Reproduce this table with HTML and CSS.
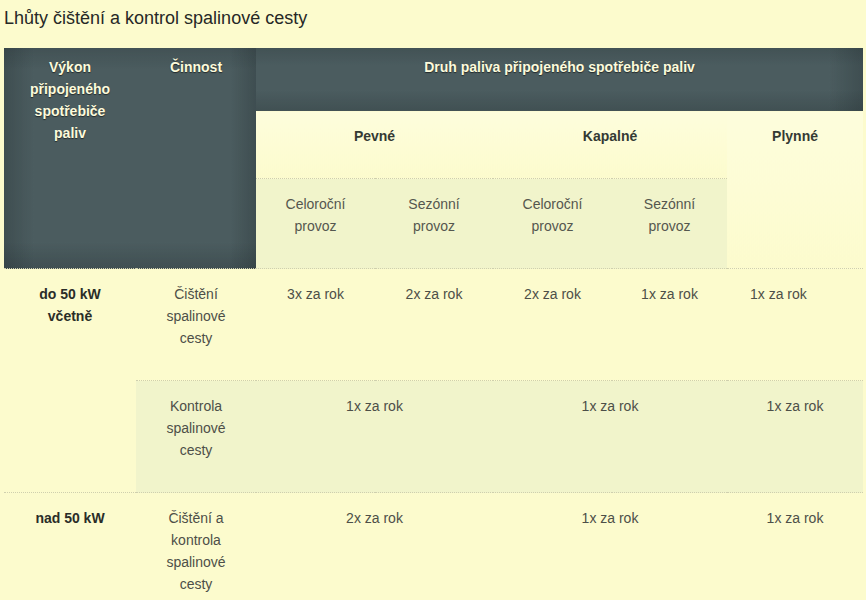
FILE: index.html
```html
<!DOCTYPE html>
<html lang="cs">
<head>
<meta charset="utf-8">
<title>Lhůty čištění a kontrol spalinové cesty</title>
<link rel="stylesheet" href="styles.css">
</head>
<body>
<h1 class="title">Lhůty čištění a kontrol spalinové cesty</h1>
<table class="grid">
  <colgroup>
    <col class="c1"><col class="c2"><col class="c3"><col class="c4"><col class="c5"><col class="c6"><col class="c7">
  </colgroup>
  <thead>
    <tr>
      <th class="dark dark-left" rowspan="3">Výkon připojeného spotřebiče paliv</th>
      <th class="dark dark-mid" rowspan="3">Činnost</th>
      <th class="dark dark-top" colspan="5">Druh paliva připojeného spotřebiče paliv</th>
    </tr>
    <tr>
      <th class="fuel" colspan="2">Pevné</th>
      <th class="fuel" colspan="2">Kapalné</th>
      <th class="fuel" rowspan="2">Plynné</th>
    </tr>
    <tr>
      <th class="mode">Celoroční provoz</th>
      <th class="mode">Sezónní provoz</th>
      <th class="mode">Celoroční provoz</th>
      <th class="mode">Sezónní provoz</th>
    </tr>
  </thead>
  <tbody>
    <tr>
      <td class="label" rowspan="2">do 50 kW včetně</td>
      <td>Čištění spalinové cesty</td>
      <td>3x za rok</td>
      <td>2x za rok</td>
      <td>2x za rok</td>
      <td>1x za rok</td>
      <td class="offset">1x za rok</td>
    </tr>
    <tr class="shaded">
      <td>Kontrola spalinové cesty</td>
      <td colspan="2">1x za rok</td>
      <td colspan="2">1x za rok</td>
      <td>1x za rok</td>
    </tr>
    <tr>
      <td class="label">nad 50 kW</td>
      <td>Čištění a kontrola spalinové cesty</td>
      <td colspan="2">2x za rok</td>
      <td colspan="2">1x za rok</td>
      <td>1x za rok</td>
    </tr>
  </tbody>
</table>
</body>
</html>
```
FILE: styles.css
```css
html, body {
  margin: 0;
  background: #fcfbcd;
}
body {
  font-family: "Liberation Sans", Arial, sans-serif;
  font-size: 14px;
  color: #4d4f48;
}
.title {
  margin: 7px 4px 0;
  font-size: 18px;
  line-height: 22px;
  font-weight: normal;
  color: #262826;
}
.grid {
  margin: 19px 0 0 4px;
  width: 859px;
  table-layout: fixed;
  border-collapse: collapse;
}
.c1 { width: 132px; }
.c2 { width: 120px; }
.c3 { width: 119px; }
.c4 { width: 118px; }
.c5 { width: 119px; }
.c6 { width: 115px; }
.c7 { width: 136px; }

.grid th, .grid td {
  padding: 14px 20px 31px;
  line-height: 22px;
  text-align: center;
  vertical-align: top;
  border-top: 1px dotted #cfcfae;
}
.grid th {
  font-weight: bold;
  color: #343a34;
}
.grid th.dark {
  padding: 8px 20px 32px;
  border: none;
  color: #fdfbdc;
  text-shadow: 0 1px 1px rgba(0, 0, 0, 0.55);
  background-color: #4b5c5f;
}
.dark-left {
  background-image:
    linear-gradient(to right, rgba(25, 35, 38, 0.25), rgba(25, 35, 38, 0) 30px),
    linear-gradient(to top, rgba(25, 35, 38, 0.22), rgba(25, 35, 38, 0) 26px),
    linear-gradient(to bottom, rgba(25, 35, 38, 0.18), rgba(25, 35, 38, 0) 22px);
}
.dark-mid {
  background-image:
    linear-gradient(to left, rgba(25, 35, 38, 0.25), rgba(25, 35, 38, 0) 26px),
    linear-gradient(to top, rgba(25, 35, 38, 0.22), rgba(25, 35, 38, 0) 26px),
    linear-gradient(to bottom, rgba(25, 35, 38, 0.18), rgba(25, 35, 38, 0) 22px);
}
.dark-top {
  background-image:
    linear-gradient(to left, rgba(25, 35, 38, 0.25), rgba(25, 35, 38, 0) 34px),
    linear-gradient(to top, rgba(25, 35, 38, 0.2), rgba(25, 35, 38, 0) 20px),
    linear-gradient(to bottom, rgba(25, 35, 38, 0.18), rgba(25, 35, 38, 0) 18px);
}
.grid th.fuel {
  border-top: 1px solid transparent;
  background: linear-gradient(to bottom, #fdfddc, #fcfbcd);
}
.grid th.mode {
  font-weight: normal;
  color: #55574f;
  background: #f1f4cb;
}
.shaded td {
  background: #f1f4cb;
}
.grid td.label {
  font-weight: bold;
  color: #2a2d28;
  background: #fcfbcd;
}
.grid td.offset {
  text-align: left;
  padding-left: 23px;
  padding-right: 10px;
}
```
